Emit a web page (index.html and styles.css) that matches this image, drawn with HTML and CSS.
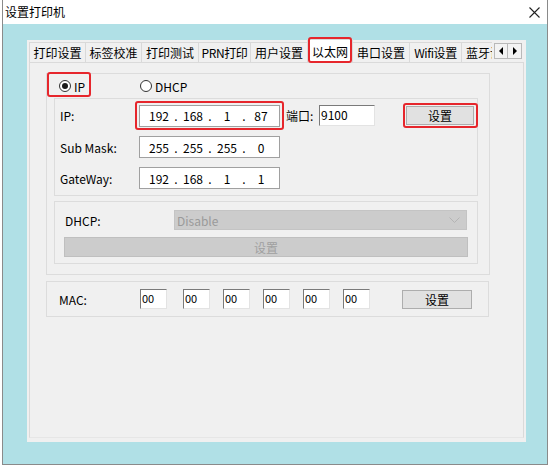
FILE: index.html
```html
<!DOCTYPE html>
<html lang="zh-CN">
<head>
    <meta charset="UTF-8">
    <meta name="viewport" content="width=device-width, initial-scale=1.0">
    <title>设置打印机</title>
    <link rel="stylesheet" href="styles.css">
</head>
<body>
    <div class="window">
        <div class="titlebar">
            <span class="title">设置打印机</span>
            <svg class="close" width="11" height="11" viewBox="0 0 11 11">
                <path d="M0.5 0.5 L10.5 10.5 M10.5 0.5 L0.5 10.5" stroke="#222" stroke-width="1.1" fill="none"/>
            </svg>
        </div>

        <div class="client">
            <div class="tabctl">
                <div class="tabstrip">
                    <div class="tabs">
                        <div class="tab tab-first">打印设置</div>
                        <div class="tab">标签校准</div>
                        <div class="tab tab-wide">打印测试</div>
                        <div class="tab tab-short">PRN打印</div>
                        <div class="tab tab-wide">用户设置</div>
                        <div class="tab active mark mark-tab">以太网</div>
                        <div class="tab tab-wide">串口设置</div>
                        <div class="tab tab-short">Wifi设置</div>
                        <div class="tab tab-last">蓝牙设置</div>
                    </div>
                    <div class="scroll">
                        <span class="arrow"><i class="tri-left"></i></span>
                        <span class="arrow"><i class="tri-right"></i></span>
                    </div>
                </div>

                <div class="page">
                    <div class="group net">
                        <div class="mark-ip"></div>
                        <div class="radios">
                            <label class="radio"><span class="dot checked"></span>IP</label>
                            <label class="radio"><span class="dot"></span>DHCP</label>
                        </div>

                        <div class="group static">
                            <div class="row first">
                                <span class="label">IP:</span>
                                <div class="ipbox mark mark-field">
                                    <span class="oct">192</span><span class="sep">.</span>
                                    <span class="oct">168</span><span class="sep">.</span>
                                    <span class="oct">1</span><span class="sep">.</span>
                                    <span class="oct">87</span>
                                </div>
                                <span class="port-label">端口:</span>
                                <div class="edit port">9100</div>
                                <button class="btn set mark mark-btn">设置</button>
                            </div>
                            <div class="row">
                                <span class="label">Sub Mask:</span>
                                <div class="ipbox">
                                    <span class="oct">255</span><span class="sep">.</span>
                                    <span class="oct">255</span><span class="sep">.</span>
                                    <span class="oct">255</span><span class="sep">.</span>
                                    <span class="oct">0</span>
                                </div>
                            </div>
                            <div class="row">
                                <span class="label">GateWay:</span>
                                <div class="ipbox">
                                    <span class="oct">192</span><span class="sep">.</span>
                                    <span class="oct">168</span><span class="sep">.</span>
                                    <span class="oct">1</span><span class="sep">.</span>
                                    <span class="oct">1</span>
                                </div>
                            </div>
                        </div>

                        <div class="group dhcp">
                            <div class="dhcp-row">
                                <span class="dhcp-label">DHCP:</span>
                                <div class="combo">
                                    <span>Disable</span>
                                    <svg width="11" height="7" viewBox="0 0 11 7">
                                        <path d="M0.5 0.5 L5.5 5.5 L10.5 0.5" stroke="#b4b4b4" stroke-width="1" fill="none"/>
                                    </svg>
                                </div>
                            </div>
                            <button class="btn wide" disabled>设置</button>
                        </div>
                    </div>

                    <div class="group mac">
                        <span class="mac-label">MAC:</span>
                        <div class="edit byte first">00</div>
                        <div class="edit byte">00</div>
                        <div class="edit byte">00</div>
                        <div class="edit byte">00</div>
                        <div class="edit byte">00</div>
                        <div class="edit byte">00</div>
                        <button class="btn mac-set">设置</button>
                    </div>
                </div>
            </div>
        </div>
    </div>
</body>
</html>
```

FILE: styles.css
```css
* {
    box-sizing: border-box;
}
body {
    margin: 0;
    background: #fff;
    font-family: "Noto Sans CJK SC", "Noto Sans", sans-serif;
    font-size: 12px;
    color: #000;
}
button {
    font-family: inherit;
    font-size: 12px;
    padding: 0;
}

/* window frame */
.window {
    width: 546px;
    height: 465px;
    margin-left: 2px;
    border: 1px solid #8a8a8a;
    border-top: none;
    display: flex;
    flex-direction: column;
}
.titlebar {
    height: 24px;
    flex: none;
    display: flex;
    align-items: center;
    padding-left: 2px;
    background: #fff;
}
.title {
    font-size: 12px;
    line-height: 1;
}
.close {
    margin-left: auto;
    margin-right: 7px;
}
.client {
    flex: 1;
    display: flex;
    background: #b0e0e6;
    padding: 16px 21px 22px 24px;
}

/* tab control */
.tabctl {
    flex: 1;
    display: flex;
    flex-direction: column;
    background: #f0f0f0;
    padding: 2px 2px 4px 2px;
}
.tabstrip {
    height: 20px;
    display: flex;
    flex: none;
}
.tabs {
    width: 463px;
    display: flex;
    overflow-x: clip;
    overflow-y: visible;
}
.tab {
    flex: none;
    width: 56px;
    height: 20px;
    line-height: 19px;
    text-align: center;
    border: 1px solid #d9d9d9;
    border-bottom: none;
    border-left: none;
    background: #f0f0f0;
    white-space: nowrap;
}
.tab-first {
    width: 57px;
    border-left: 1px solid #d9d9d9;
}
.tab-wide {
    width: 57px;
}
.tab-short {
    width: 52px;
    letter-spacing: -0.4px;
}
.tab-last {
    text-align: left;
    padding-left: 4px;
}
.tab.active {
    width: 46px;
    height: 23px;
    margin-top: -3px;
    margin-left: -1px;
    line-height: 23px;
    background: #fff;
    border-left: 1px solid #d9d9d9;
    position: relative;
    z-index: 2;
}
.scroll {
    display: flex;
    margin-left: 2px;
    margin-top: 1px;
}
.arrow {
    width: 14px;
    height: 16px;
    border: 1px solid #b9b9b9;
    background: #f3f3f3;
    display: flex;
    align-items: center;
    justify-content: center;
}
.arrow + .arrow {
    border-left: none;
}
.tri-left {
    border-right: 4px solid #000;
    border-top: 4px solid transparent;
    border-bottom: 4px solid transparent;
}
.tri-right {
    border-left: 4px solid #000;
    border-top: 4px solid transparent;
    border-bottom: 4px solid transparent;
}
.page {
    flex: 1;
    border: 1px solid #dadada;
    border-bottom-color: #e6e6e6;
    padding: 10px 0 0 16px;
    position: relative;
    z-index: 1;
}

/* group boxes */
.group {
    border: 1px solid #dcdcdc;
}
.net {
    width: 444px;
    padding: 0 11px 10px 7px;
    position: relative;
}
.radios {
    height: 24px;
    display: flex;
    align-items: center;
    padding-left: 5px;
}
.radio {
    width: 80px;
    display: flex;
    align-items: center;
    gap: 3px;
}
.radio + .radio {
    margin-left: 1px;
}
.dot {
    width: 12px;
    height: 12px;
    border: 1px solid #333;
    border-radius: 50%;
    background: #fff;
    display: flex;
    align-items: center;
    justify-content: center;
}
.dot.checked::before {
    content: "";
    width: 6px;
    height: 6px;
    border-radius: 50%;
    background: #1a1a1a;
}

.static {
    padding: 5px 0 6px 5px;
    display: flex;
    flex-direction: column;
    gap: 9px;
}
.row {
    height: 22px;
    display: flex;
    align-items: center;
}
.row.first {
    height: 23px;
}
.label {
    width: 79px;
}
.ipbox {
    width: 141px;
    height: 22px;
    border: 1px solid #a0a0a0;
    background: #fff;
    display: flex;
    align-items: center;
    padding-left: 6px;
}
.oct {
    width: 26px;
    text-align: center;
}
.sep {
    width: 8px;
    text-align: center;
}
.port-label {
    margin-left: 6px;
    width: 33px;
}
.edit {
    background: #fff;
    border: 1px solid #e3e3e3;
    border-top-color: #7a7a7a;
    border-left-color: #7a7a7a;
    line-height: 18px;
    padding-left: 1px;
}
.port {
    width: 56px;
    height: 21px;
}
.btn {
    background: #e1e1e1;
    border: 1px solid #adadad;
    color: #000;
}
.set {
    width: 68px;
    height: 19px;
    margin-left: 31px;
}

.dhcp {
    margin-top: 5px;
    padding: 8px 8px 6px 9px;
}
.dhcp-row {
    display: flex;
    align-items: center;
    height: 20px;
}
.dhcp-label {
    width: 110px;
    padding-left: 1px;
}
.combo {
    width: 293px;
    height: 20px;
    background: #cccccc;
    border: 1px solid #c4c4c4;
    color: #9a9a9a;
    display: flex;
    align-items: center;
    justify-content: space-between;
    padding: 0 6px 0 2px;
}
.wide {
    width: 404px;
    height: 20px;
    margin-top: 7px;
    display: block;
}
.wide:disabled {
    background: #cccccc;
    border-color: #bfbfbf;
    color: #a0a0a0;
}

.mac {
    width: 443px;
    height: 36px;
    margin-top: 6px;
    display: flex;
    align-items: center;
    padding-left: 12px;
}
.mac-label {
    width: 81px;
}
.byte {
    width: 27px;
    height: 20px;
    margin-left: 13px;
    font-size: 11px;
    line-height: 16px;
}
.byte.first {
    margin-left: 0;
}
.byte.first + .byte {
    margin-left: 16px;
}
.mac-set {
    width: 70px;
    height: 19px;
    margin-left: 32px;
}

/* red highlight boxes */
.mark {
    position: relative;
}
.mark::after {
    content: "";
    position: absolute;
    border: 2px solid #e6262c;
    border-radius: 3px;
    pointer-events: none;
}
.mark-tab::after {
    top: -3px;
    left: 0;
    right: 0;
    bottom: -1px;
}
.mark-field::after {
    top: -5px;
    left: -5px;
    right: -5px;
    bottom: -4px;
}
.mark-btn::after {
    top: -4px;
    left: -4px;
    right: -5px;
    bottom: -4px;
}
.mark-ip {
    position: absolute;
    left: 0;
    top: -2px;
    width: 44px;
    height: 25px;
    border: 2px solid #e6262c;
    border-radius: 3px;
}
```
